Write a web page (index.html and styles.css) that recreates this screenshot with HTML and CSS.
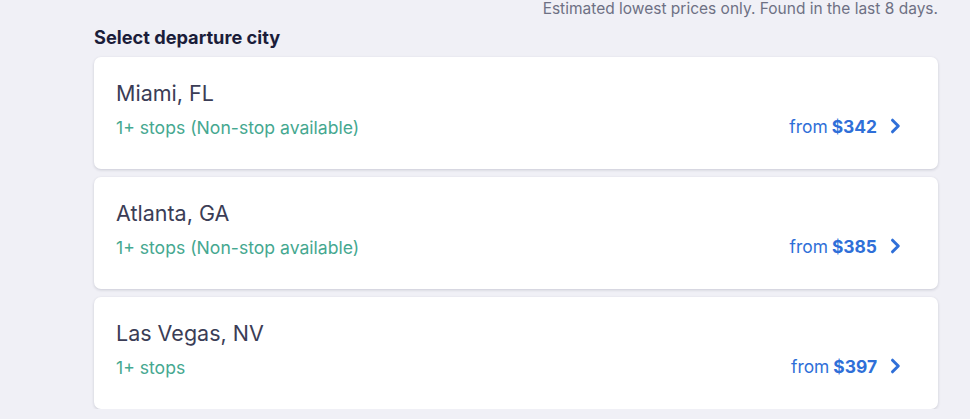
FILE: index.html
```html
<!DOCTYPE html>
<html>
<head>
<meta charset="utf-8">
<link rel="stylesheet" href="styles.css">
</head>
<body>
<div class="page">
  <div class="note">Estimated lowest prices only. Found in the last 8 days.</div>
  <h2 class="title">Select departure city</h2>
  <div class="list">
    <div class="card">
      <div class="info">
        <div class="city">Miami, FL</div>
        <div class="stops">1+ stops (Non-stop available)</div>
      </div>
      <div class="price">from <b>$342</b>
        <svg class="chev" viewBox="0 0 12 16" width="12" height="16"><path d="M3.5 2.2l5.8 5.8-5.8 5.8" fill="none" stroke="currentColor" stroke-width="3" stroke-linecap="round" stroke-linejoin="round"/></svg>
      </div>
    </div>
    <div class="card">
      <div class="info">
        <div class="city">Atlanta, GA</div>
        <div class="stops">1+ stops (Non-stop available)</div>
      </div>
      <div class="price">from <b>$385</b>
        <svg class="chev" viewBox="0 0 12 16" width="12" height="16"><path d="M3.5 2.2l5.8 5.8-5.8 5.8" fill="none" stroke="currentColor" stroke-width="3" stroke-linecap="round" stroke-linejoin="round"/></svg>
      </div>
    </div>
    <div class="card">
      <div class="info">
        <div class="city">Las Vegas, NV</div>
        <div class="stops">1+ stops</div>
      </div>
      <div class="price">from <b>$397</b>
        <svg class="chev" viewBox="0 0 12 16" width="12" height="16"><path d="M3.5 2.2l5.8 5.8-5.8 5.8" fill="none" stroke="currentColor" stroke-width="3" stroke-linecap="round" stroke-linejoin="round"/></svg>
      </div>
    </div>
  </div>
</div>
</body>
</html>
```
FILE: styles.css
```css
html, body {
  margin: 0;
  padding: 0;
  background: #f0f0f6;
  font-family: Inter, "Open Sans", sans-serif;
}
.page {
  width: 844px;
  margin-left: 94px;
}
.note {
  text-align: right;
  font-size: 15.5px;
  line-height: 18px;
  color: #6e7084;
}
.title {
  margin: 7px 0 0 0;
  font-size: 18.2px;
  line-height: 24px;
  font-weight: 700;
  color: #1b1d3a;
}
.list {
  margin-top: 8px;
  display: flex;
  flex-direction: column;
  gap: 8px;
}
.card {
  background: #fff;
  border-radius: 7px;
  box-shadow: 0 1px 3px rgba(30, 32, 60, 0.18);
  height: 112px;
  box-sizing: border-box;
  padding: 0 37px 0 22px;
  display: flex;
  align-items: center;
  justify-content: space-between;
}
.info {
  display: flex;
  flex-direction: column;
  gap: 9px;
  margin-top: -7px;
}
.city {
  font-size: 21.5px;
  line-height: 28px;
  color: #3b3d56;
}
.stops {
  font-size: 17.6px;
  line-height: 24px;
  color: #45a890;
}
.price {
  margin-top: 26px;
  font-size: 17.4px;
  color: #2f6fd8;
  display: flex;
  align-items: center;
  gap: 4px;
}
.price b {
  font-weight: 700;
}
.chev {
  margin-left: 8px;
  color: #2f6fd8;
}
```
